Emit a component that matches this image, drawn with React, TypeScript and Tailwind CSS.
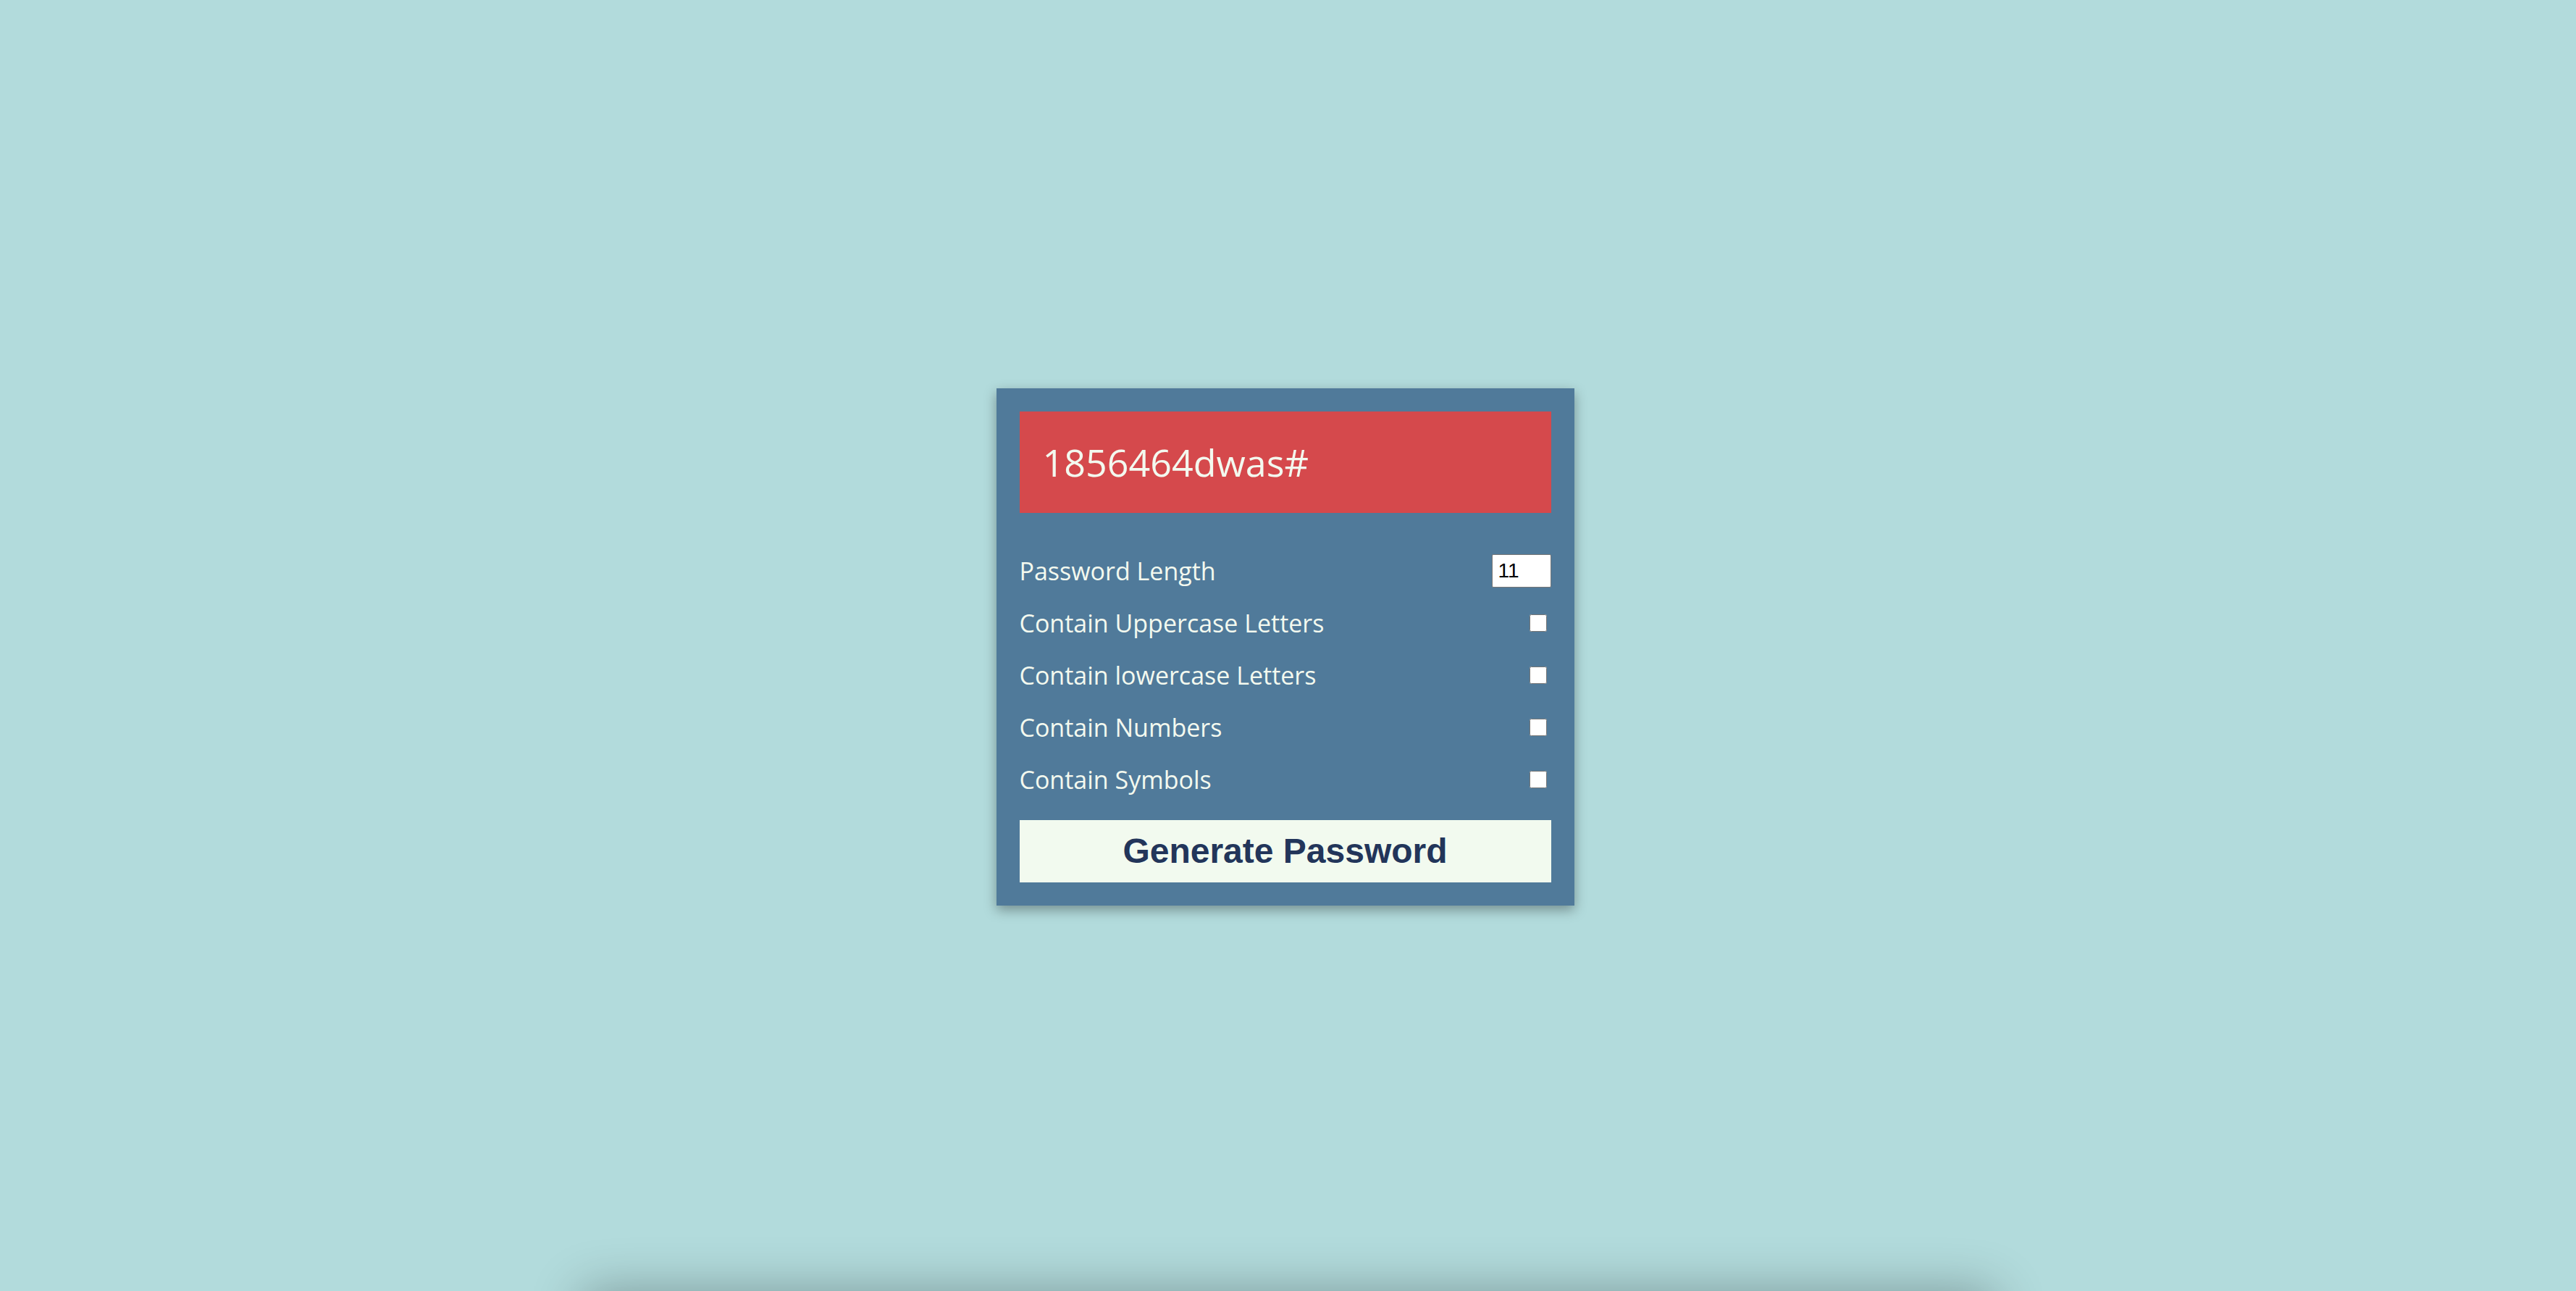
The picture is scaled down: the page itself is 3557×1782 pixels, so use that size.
import { useState } from 'react'

const options = [
    'Contain Uppercase Letters',
    'Contain lowercase Letters',
    'Contain Numbers',
    'Contain Symbols',
]

const App = () => {
    const [length, setLength] = useState('11')
    const [checked, setChecked] = useState<boolean[]>([false, false, false, false])

    return (
        <div className="h-screen w-full overflow-hidden bg-[#b2dbdc] flex flex-col items-center">
            <div className="flex-1 flex items-center justify-center w-full pr-[8px] pt-[4px]">
                <div
                    className="w-[798px] p-8 bg-[#507a9a] shadow-[0_6px_16px_rgba(0,0,0,0.35)] text-[#f3f9ef]"
                    style={{ fontFamily: '"Open Sans", sans-serif' }}
                >
                    <div className="h-[140px] bg-[#d5494c] flex items-center px-8 text-[52px]">
                        1856464dwas#
                    </div>

                    <div className="mt-[44px]">
                        <div className="h-[72px] flex items-center justify-between text-[34px]">
                            <label>Password Length</label>
                            <input
                                type="number"
                                value={length}
                                onChange={(e) => setLength(e.target.value)}
                                className="w-[82px] h-[46px] bg-white text-black border border-[#767676] rounded-[2px] px-2 text-[28px] [appearance:textfield]"
                                style={{ fontFamily: '"Liberation Sans", Arial, sans-serif' }}
                            />
                        </div>
                        {options.map((opt, i) => (
                            <div key={opt} className="h-[72px] flex items-center justify-between text-[34px]">
                                <label>{opt}</label>
                                <input
                                    type="checkbox"
                                    checked={checked[i]}
                                    onChange={() => setChecked(checked.map((c, j) => (j === i ? !c : c)))}
                                    className="w-6 h-6 mr-[6px]"
                                />
                            </div>
                        ))}
                    </div>

                    <button
                        className="mt-5 w-full h-[86px] bg-[#f2faef] text-[#22355a] text-[48px] font-bold"
                        style={{ fontFamily: '"Liberation Sans", Arial, sans-serif' }}
                    >
                        Generate Password
                    </button>
                </div>
            </div>
            {/* shadow peeking up from below the fold */}
            <div className="shrink-0 w-[1950px] h-[200px] -mb-[200px] bg-[#b2dbdc] shadow-[0_0_70px_rgba(0,0,0,0.3)]"></div>
        </div>
    )
}

export default App
